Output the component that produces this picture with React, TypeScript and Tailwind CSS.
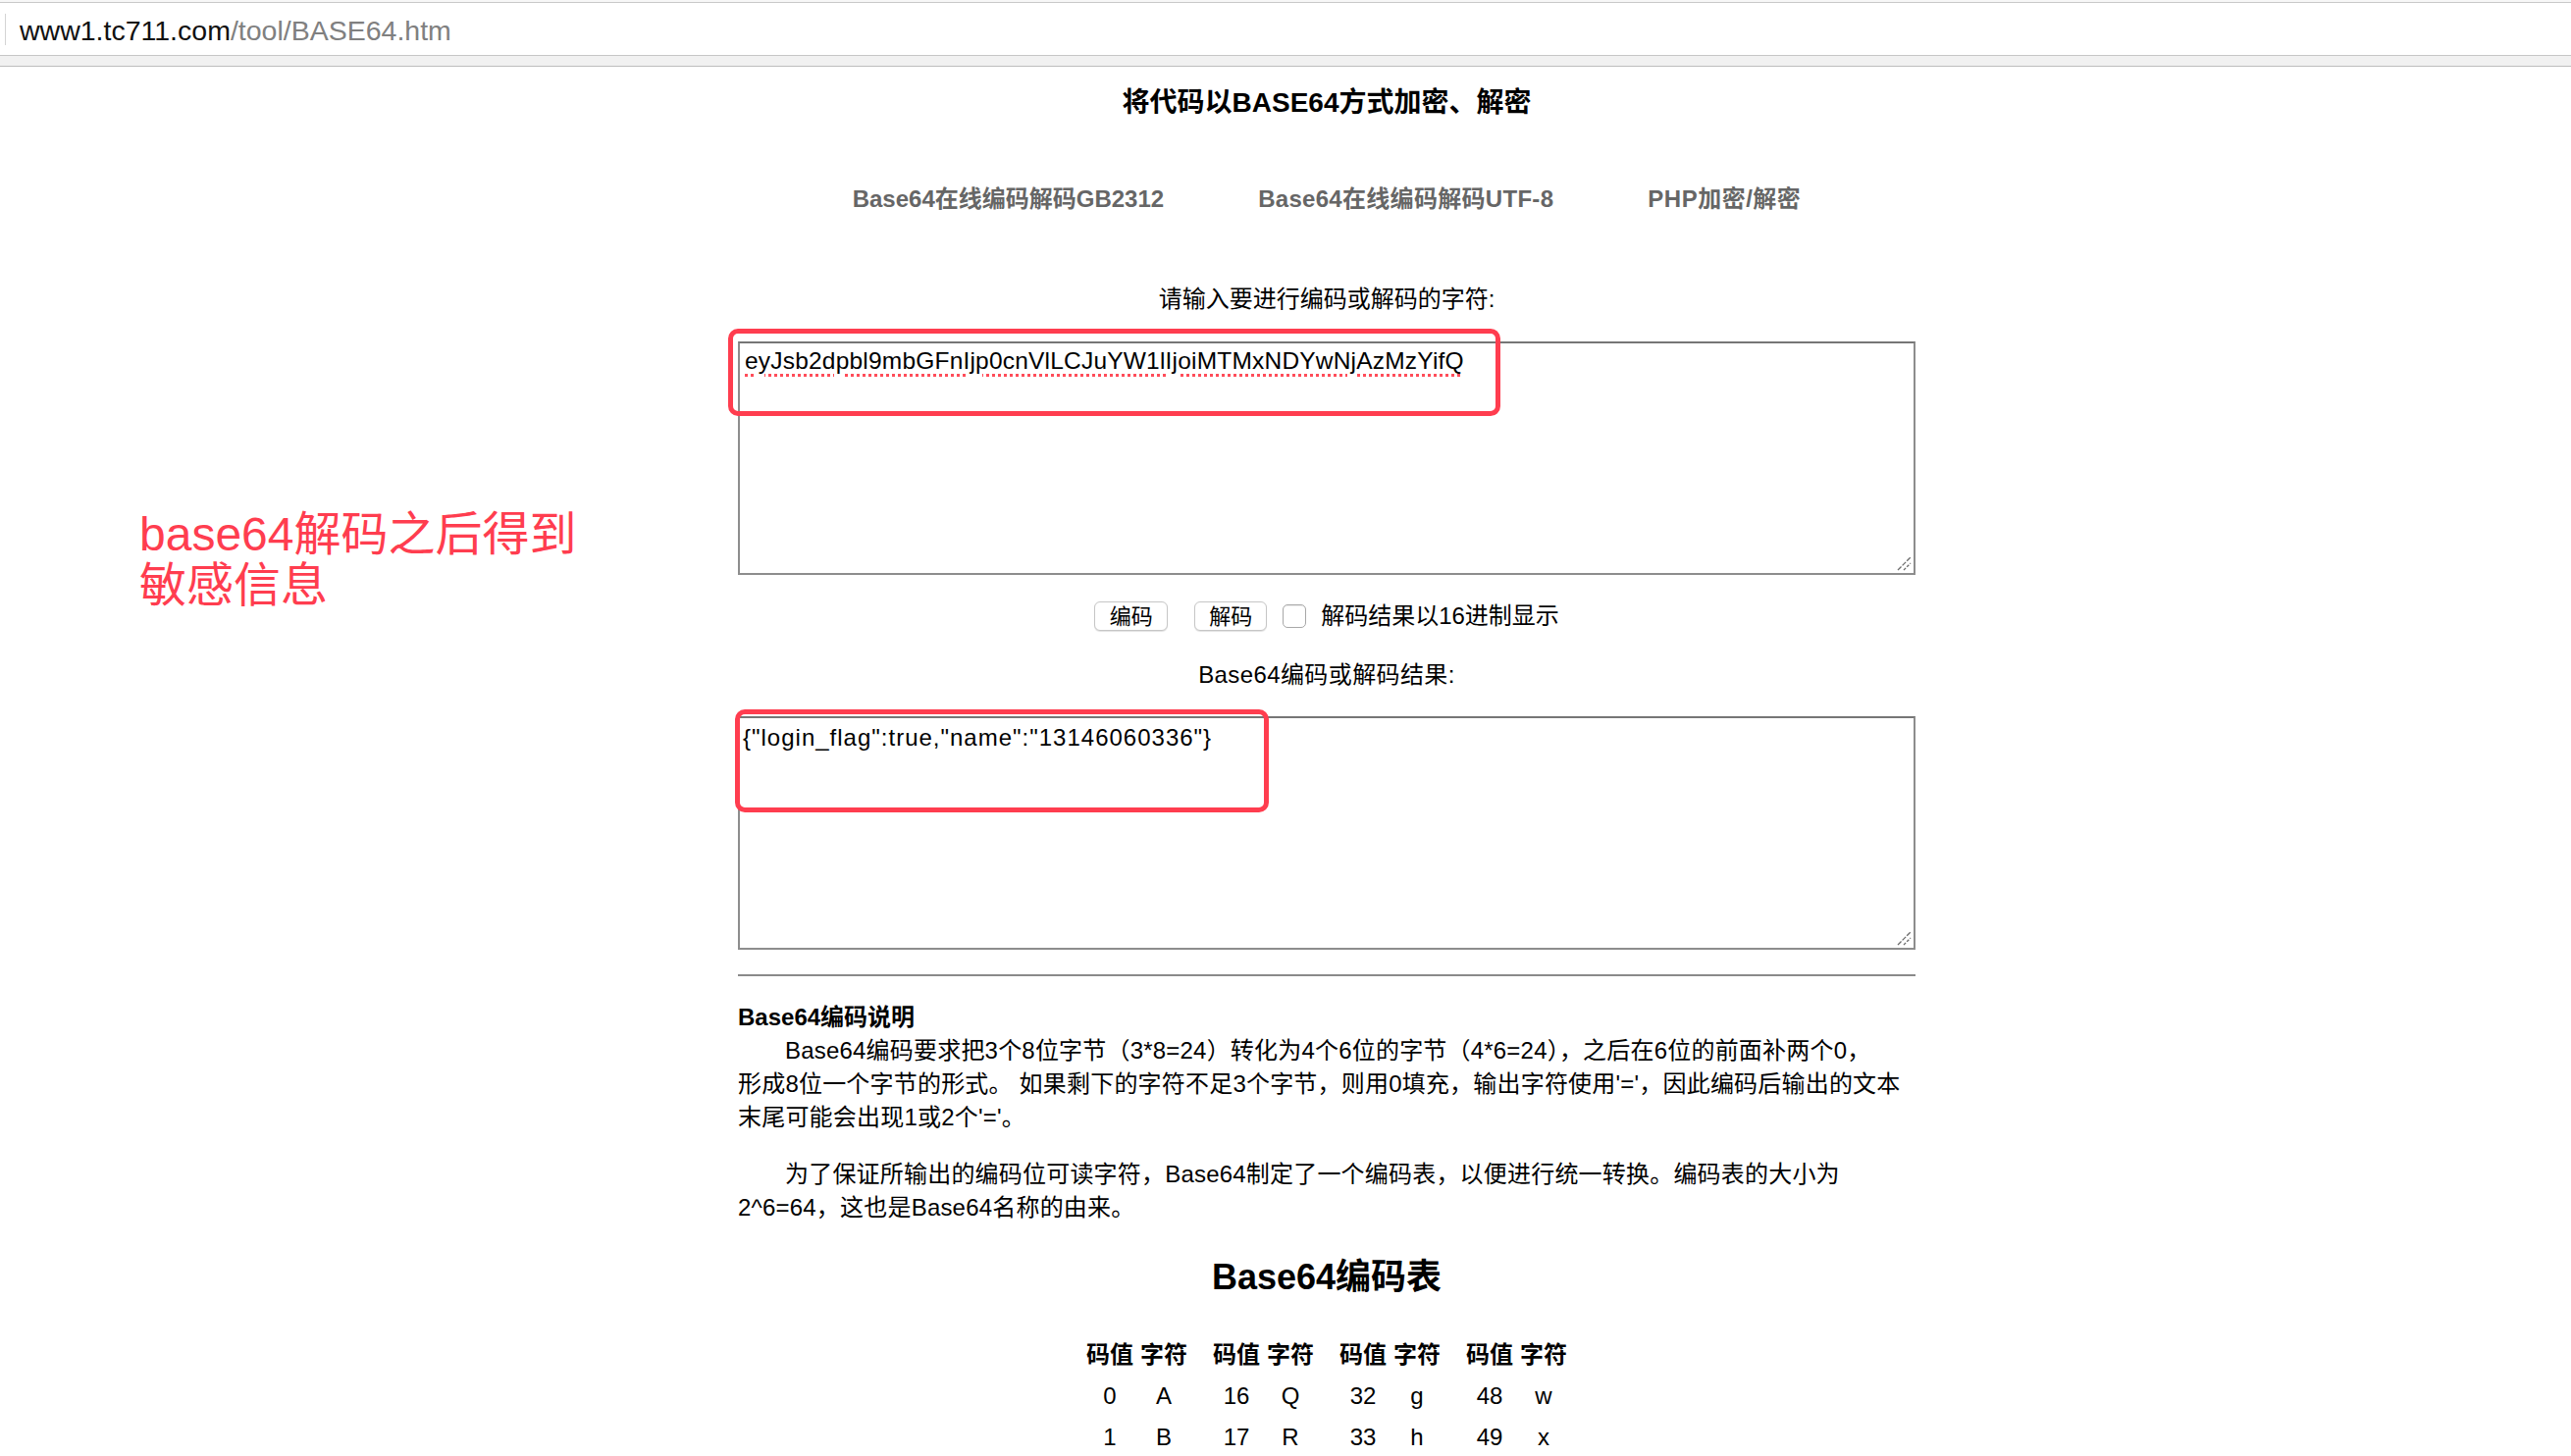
import React from "react";

const B64 = "ABCDEFGHIJKLMNOPQRSTUVWXYZabcdefghijklmnopqrstuvwxyz0123456789+/";

function Grip() {
  return (
    <svg className="absolute right-[2px] bottom-[2px]" width="16" height="16" viewBox="0 0 16 16">
      <line x1="2" y1="15" x2="15" y2="2" stroke="#6b6b6b" strokeWidth="1.3" strokeDasharray="5 1.5" />
      <line x1="8" y1="15" x2="15" y2="8" stroke="#6b6b6b" strokeWidth="1.3" strokeDasharray="3 1.5" />
    </svg>
  );
}

export default function App() {
  const rows = [0, 1];
  return (
    <div
      className="min-h-screen bg-white text-black"
      style={{ fontFamily: '"Liberation Sans", "Noto Sans CJK SC", sans-serif' }}
    >
      {/* address bar */}
      <div className="h-[2px] bg-[#f7f7f7]" />
      <div className="h-px bg-[#c9c9c9]" />
      <div className="h-[53px] bg-white flex items-center">
        <div className="ml-[5px] w-px h-[32px] bg-[#d4d4d4]" />
        <div className="ml-[14px] pt-[3px] text-[28.5px] leading-[34px] text-[#111]">
          www1.tc711.com<span className="text-[#808080]">/tool/BASE64.htm</span>
        </div>
      </div>
      <div className="h-px bg-[#c6c6c6]" />
      <div className="h-[10px] bg-[#f1f1f1]" />
      <div className="h-px bg-[#bdbdbd]" />

      <div className="flex">
        {/* annotation column */}
        <div className="w-[752px] shrink-0">
          <div className="mt-[451px] pl-[142px] text-[48px] leading-[52px] text-[#ff3d4f] whitespace-nowrap">
            base64解码之后得到
            <br />
            敏感信息
          </div>
        </div>

        {/* main content */}
        <div className="w-[1200px] shrink-0">
          <div className="mt-[17px] h-[40px] leading-[40px] text-center text-[28px] font-bold">
            将代码以BASE64方式加密、解密
          </div>

          <div className="mt-[60px] h-[36px] leading-[36px] flex justify-center gap-[96px] text-[24px] font-bold text-[#666]">
            <span>Base64在线编码解码GB2312</span>
            <span className="tracking-[0.3px]">Base64在线编码解码UTF-8</span>
            <span className="tracking-[0.5px]">PHP加密/解密</span>
          </div>

          <div className="mt-[66px] h-[36px] leading-[36px] text-center text-[24px]">
            请输入要进行编码或解码的字符:
          </div>

          <div className="relative mt-[25px] h-[238px] border-2 border-[#8d8d8d] border-t-[#767676] bg-white">
            <div className="pl-[5px] pt-[3px] text-[24.5px] leading-[30px] tracking-[0.2px] underline decoration-dotted decoration-[#ff4d5a] decoration-[3px] underline-offset-[5px]">
              eyJsb2dpbl9mbGFnIjp0cnVlLCJuYW1lIjoiMTMxNDYwNjAzMzYifQ
            </div>
            <Grip />
            <div className="absolute left-[-12px] top-[-15px] w-[787px] h-[89px] border-[5px] border-[#ff3d4f] rounded-[10px]" />
          </div>

          <div className="mt-[27px] h-[30px] flex items-center justify-center text-[22px]">
            <div className="w-[75px] h-[30px] flex items-center justify-center border border-[#c6c6c6] rounded-[6px] bg-white shadow-[0_1px_1px_rgba(0,0,0,0.12)]">
              编码
            </div>
            <div className="ml-[27px] w-[74px] h-[30px] flex items-center justify-center border border-[#c6c6c6] rounded-[6px] bg-white shadow-[0_1px_1px_rgba(0,0,0,0.12)]">
              解码
            </div>
            <div className="ml-[16px] w-[24px] h-[24px] border border-[#a8a8a8] rounded-[5px] bg-white shadow-[inset_0_1px_1px_rgba(0,0,0,0.08)]" />
            <div className="ml-[15px] text-[24px]">解码结果以16进制显示</div>
          </div>

          <div className="mt-[27px] h-[36px] leading-[36px] text-center text-[24px] tracking-[0.4px]">
            Base64编码或解码结果:
          </div>

          <div className="relative mt-[24px] h-[238px] border-2 border-[#8d8d8d] border-t-[#767676] bg-white">
            <div className="pl-[3px] pt-[5px] text-[24px] leading-[30px] tracking-[1px]">
              {'{"login_flag":true,"name":"13146060336"}'}
            </div>
            <Grip />
            <div className="absolute left-[-5px] top-[-9px] w-[544px] h-[105px] border-[5px] border-[#ff3d4f] rounded-[10px]" />
          </div>

          <div className="mt-[25px] h-[2px] bg-[#8a8a8a]" />

          <div className="mt-[25px] text-[24px] leading-[34px] whitespace-nowrap">
            <div className="font-bold">Base64编码说明</div>
            <div className="indent-[48px] tracking-[0.2px]">
              Base64编码要求把3个8位字节（3*8=24）转化为4个6位的字节（4*6=24），之后在6位的前面补两个0，
              <br />
              形成8位一个字节的形式。 如果剩下的字符不足3个字节，则用0填充，输出字符使用'='，因此编码后输出的文本
              <br />
              末尾可能会出现1或2个'='。
            </div>
            <div className="mt-[24px] indent-[48px] tracking-[0.2px]">
              为了保证所输出的编码位可读字符，Base64制定了一个编码表，以便进行统一转换。编码表的大小为
              <br />
              2^6=64，这也是Base64名称的由来。
            </div>
          </div>

          <div className="mt-[30px] h-[48px] leading-[48px] text-center text-[36px] font-bold">
            Base64编码表
          </div>

          <div className="mt-[34px] flex flex-col items-center text-[24px]">
            <div className="flex gap-[19px] h-[42px] items-center font-bold">
              {[0, 1, 2, 3].map((g) => (
                <div key={g} className="flex">
                  <div className="w-[55px] text-center">码值</div>
                  <div className="w-[55px] text-center">字符</div>
                </div>
              ))}
            </div>
            {rows.map((r) => (
              <div key={r} className="flex gap-[19px] h-[42px] items-center">
                {[0, 1, 2, 3].map((g) => {
                  const v = r + g * 16;
                  return (
                    <div key={g} className="flex">
                      <div className="w-[55px] text-center">{v}</div>
                      <div className="w-[55px] text-center">{B64[v]}</div>
                    </div>
                  );
                })}
              </div>
            ))}
          </div>
        </div>
      </div>
    </div>
  );
}
